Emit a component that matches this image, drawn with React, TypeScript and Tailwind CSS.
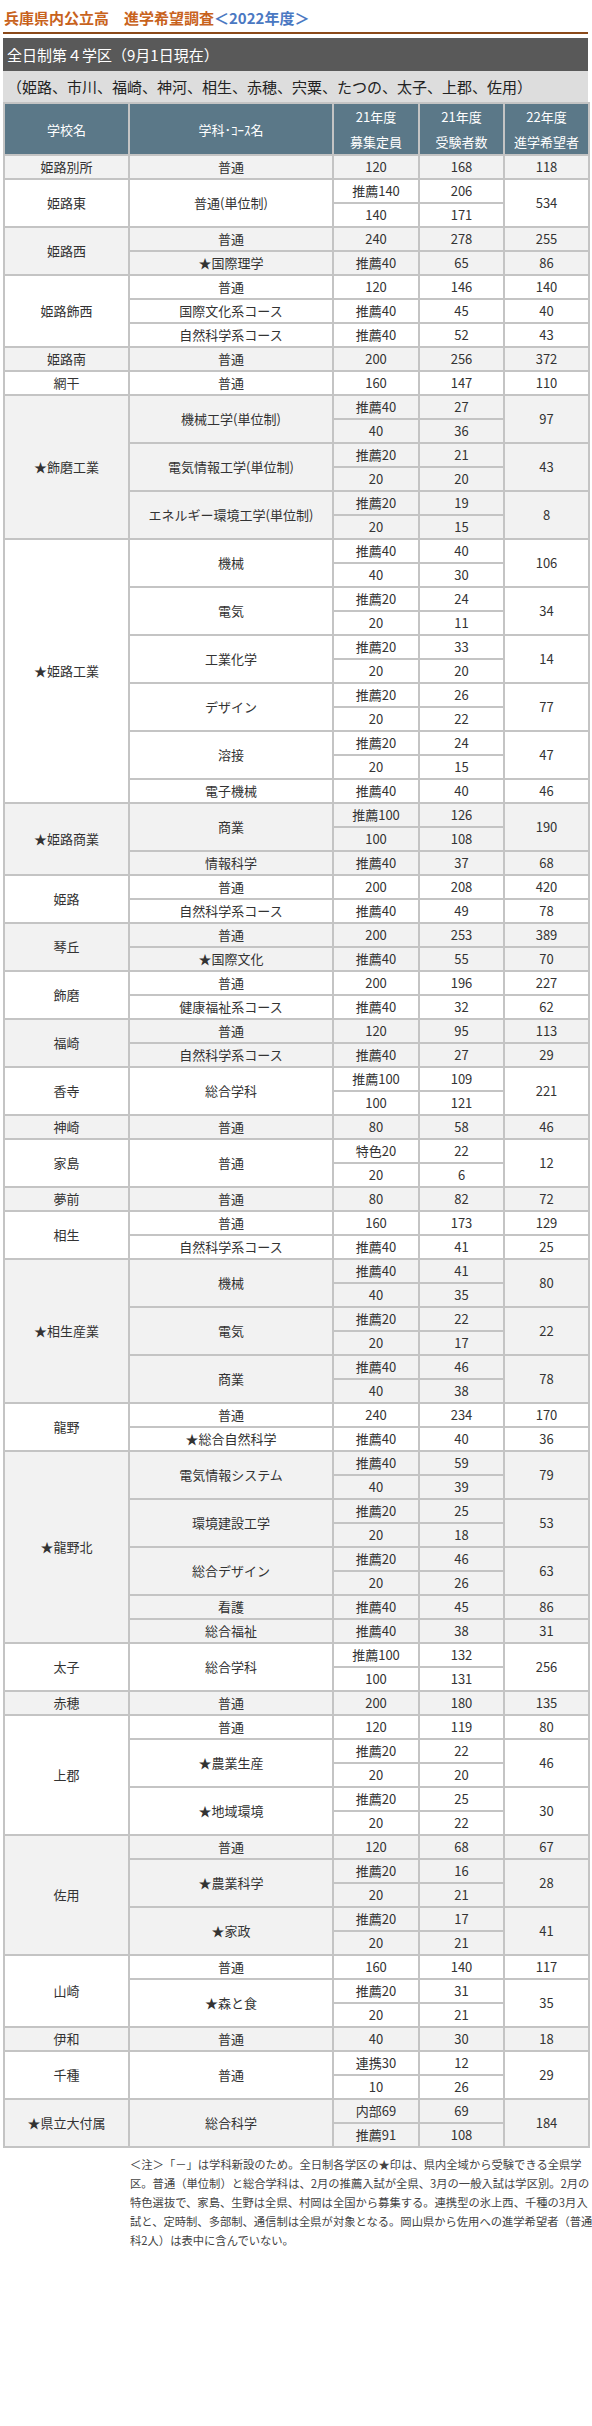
import React from 'react';

type Course = { name: string; rows: [string, string][]; want: string };
type School = { name: string; courses: Course[] };

const c = (name: string, rows: [string, string][], want: string): Course => ({ name, rows, want });

const schools: School[] = [
  { name: '姫路別所', courses: [c('普通', [['120', '168']], '118')] },
  { name: '姫路東', courses: [c('普通(単位制)', [['推薦140', '206'], ['140', '171']], '534')] },
  { name: '姫路西', courses: [c('普通', [['240', '278']], '255'), c('★国際理学', [['推薦40', '65']], '86')] },
  {
    name: '姫路飾西',
    courses: [
      c('普通', [['120', '146']], '140'),
      c('国際文化系コース', [['推薦40', '45']], '40'),
      c('自然科学系コース', [['推薦40', '52']], '43'),
    ],
  },
  { name: '姫路南', courses: [c('普通', [['200', '256']], '372')] },
  { name: '網干', courses: [c('普通', [['160', '147']], '110')] },
  {
    name: '★飾磨工業',
    courses: [
      c('機械工学(単位制)', [['推薦40', '27'], ['40', '36']], '97'),
      c('電気情報工学(単位制)', [['推薦20', '21'], ['20', '20']], '43'),
      c('エネルギー環境工学(単位制)', [['推薦20', '19'], ['20', '15']], '8'),
    ],
  },
  {
    name: '★姫路工業',
    courses: [
      c('機械', [['推薦40', '40'], ['40', '30']], '106'),
      c('電気', [['推薦20', '24'], ['20', '11']], '34'),
      c('工業化学', [['推薦20', '33'], ['20', '20']], '14'),
      c('デザイン', [['推薦20', '26'], ['20', '22']], '77'),
      c('溶接', [['推薦20', '24'], ['20', '15']], '47'),
      c('電子機械', [['推薦40', '40']], '46'),
    ],
  },
  {
    name: '★姫路商業',
    courses: [c('商業', [['推薦100', '126'], ['100', '108']], '190'), c('情報科学', [['推薦40', '37']], '68')],
  },
  { name: '姫路', courses: [c('普通', [['200', '208']], '420'), c('自然科学系コース', [['推薦40', '49']], '78')] },
  { name: '琴丘', courses: [c('普通', [['200', '253']], '389'), c('★国際文化', [['推薦40', '55']], '70')] },
  { name: '飾磨', courses: [c('普通', [['200', '196']], '227'), c('健康福祉系コース', [['推薦40', '32']], '62')] },
  { name: '福崎', courses: [c('普通', [['120', '95']], '113'), c('自然科学系コース', [['推薦40', '27']], '29')] },
  { name: '香寺', courses: [c('総合学科', [['推薦100', '109'], ['100', '121']], '221')] },
  { name: '神崎', courses: [c('普通', [['80', '58']], '46')] },
  { name: '家島', courses: [c('普通', [['特色20', '22'], ['20', '6']], '12')] },
  { name: '夢前', courses: [c('普通', [['80', '82']], '72')] },
  { name: '相生', courses: [c('普通', [['160', '173']], '129'), c('自然科学系コース', [['推薦40', '41']], '25')] },
  {
    name: '★相生産業',
    courses: [
      c('機械', [['推薦40', '41'], ['40', '35']], '80'),
      c('電気', [['推薦20', '22'], ['20', '17']], '22'),
      c('商業', [['推薦40', '46'], ['40', '38']], '78'),
    ],
  },
  { name: '龍野', courses: [c('普通', [['240', '234']], '170'), c('★総合自然科学', [['推薦40', '40']], '36')] },
  {
    name: '★龍野北',
    courses: [
      c('電気情報システム', [['推薦40', '59'], ['40', '39']], '79'),
      c('環境建設工学', [['推薦20', '25'], ['20', '18']], '53'),
      c('総合デザイン', [['推薦20', '46'], ['20', '26']], '63'),
      c('看護', [['推薦40', '45']], '86'),
      c('総合福祉', [['推薦40', '38']], '31'),
    ],
  },
  { name: '太子', courses: [c('総合学科', [['推薦100', '132'], ['100', '131']], '256')] },
  { name: '赤穂', courses: [c('普通', [['200', '180']], '135')] },
  {
    name: '上郡',
    courses: [
      c('普通', [['120', '119']], '80'),
      c('★農業生産', [['推薦20', '22'], ['20', '20']], '46'),
      c('★地域環境', [['推薦20', '25'], ['20', '22']], '30'),
    ],
  },
  {
    name: '佐用',
    courses: [
      c('普通', [['120', '68']], '67'),
      c('★農業科学', [['推薦20', '16'], ['20', '21']], '28'),
      c('★家政', [['推薦20', '17'], ['20', '21']], '41'),
    ],
  },
  {
    name: '山崎',
    courses: [c('普通', [['160', '140']], '117'), c('★森と食', [['推薦20', '31'], ['20', '21']], '35')],
  },
  { name: '伊和', courses: [c('普通', [['40', '30']], '18')] },
  { name: '千種', courses: [c('普通', [['連携30', '12'], ['10', '26']], '29')] },
  { name: '★県立大付属', courses: [c('総合科学', [['内部69', '69'], ['推薦91', '108']], '184')] },
];

const td = 'border-2 border-[#c4c4c4] h-[24px] p-0 text-center leading-[20px] align-middle';
const th = 'border-2 border-[#c4c4c4] p-0 text-center font-normal text-white leading-[25px] align-middle';

const notes = [
  '＜注＞「－」は学科新設のため。全日制各学区の★印は、県内全域から受験できる全県学',
  '区。普通（単位制）と総合学科は、2月の推薦入試が全県、3月の一般入試は学区別。2月の',
  '特色選抜で、家島、生野は全県、村岡は全国から募集する。連携型の氷上西、千種の3月入',
  '試と、定時制、多部制、通信制は全県が対象となる。岡山県から佐用への進学希望者（普通',
  '科2人）は表中に含んでいない。',
];

function SchoolRows({ school, shaded }: { school: School; shaded: boolean }) {
  const total = school.courses.reduce((n, co) => n + co.rows.length, 0);
  const bg = shaded ? 'bg-[#f2f2f2]' : 'bg-white';
  const out: React.ReactNode[] = [];
  let first = true;
  school.courses.forEach((co, ci) => {
    co.rows.forEach((r, ri) => {
      out.push(
        <tr key={`${ci}-${ri}`} className={bg}>
          {first && (
            <td rowSpan={total} className={td}>
              {school.name}
            </td>
          )}
          {ri === 0 && (
            <td rowSpan={co.rows.length} className={td}>
              {co.name}
            </td>
          )}
          <td className={td}>{r[0]}</td>
          <td className={td}>{r[1]}</td>
          {ri === 0 && (
            <td rowSpan={co.rows.length} className={td}>
              {co.want}
            </td>
          )}
        </tr>
      );
      first = false;
    });
  });
  return <>{out}</>;
}

export default function App() {
  return (
    <div className="bg-white min-h-[2426px] font-['Noto_Sans_CJK_JP','Noto_Sans',sans-serif] text-[#333]">
      <div className="ml-[3px] w-[585px]">
        <div className="pt-[8px] pb-[4px] leading-[20px] text-[15px] font-bold border-b-2 border-[#8b4a1a] pl-[1px]">
          <span className="text-[#c8621c]">兵庫県内公立高　進学希望調査</span>
          <span className="text-[#4a78c2]">＜2022年度＞</span>
        </div>
        <div className="mt-[4px] h-[33px] bg-[#595959] text-white text-[15px] leading-[33px] pl-[4px]">
          全日制第４学区（9月1日現在）
        </div>
        <div className="h-[31px] bg-[#dddddd] text-[#222] text-[15px] leading-[31px] pl-[4px]">
          （姫路、市川、福崎、神河、相生、赤穂、宍粟、たつの、太子、上郡、佐用）
        </div>
        <table className="w-[585px] table-fixed border-collapse text-[13px]">
          <colgroup>
            <col className="w-[125px]" />
            <col className="w-[204px]" />
            <col className="w-[86px]" />
            <col className="w-[85px]" />
            <col className="w-[85px]" />
          </colgroup>
          <thead>
            <tr className="bg-[#5b7888]">
              <th className={th}>学校名</th>
              <th className={th}>学科･ｺｰｽ名</th>
              <th className={th}>
                21年度
                <br />
                募集定員
              </th>
              <th className={th}>
                21年度
                <br />
                受験者数
              </th>
              <th className={th}>
                22年度
                <br />
                進学希望者
              </th>
            </tr>
          </thead>
          <tbody>
            {schools.map((s, i) => (
              <SchoolRows key={s.name} school={s} shaded={i % 2 === 0} />
            ))}
          </tbody>
        </table>
        <div className="mt-[7px] ml-[127px] text-[11.3px] leading-[19px] text-[#444] whitespace-nowrap">
          {notes.map((n) => (
            <div key={n}>{n}</div>
          ))}
        </div>
      </div>
    </div>
  );
}
